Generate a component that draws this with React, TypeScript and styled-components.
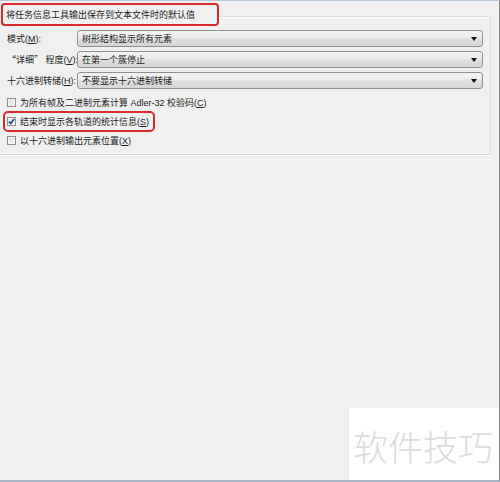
import React from 'react'
import styled, { createGlobalStyle } from 'styled-components'

const GlobalStyle = createGlobalStyle`
  html, body {
    margin: 0;
    padding: 0;
    background: #f0f0f0;
  }
  body {
    font-family: "Liberation Sans", "Noto Sans CJK SC", sans-serif;
    font-size: 9px;
    color: #1c1c1c;
  }
`

const Window = styled.div`
  position: relative;
  box-sizing: border-box;
  width: 500px;
  height: 482px;
  background: #f0f0f0;
  border-top: 1px solid #b7c6d6;
  border-right: 1px solid #8c8c8c;
  border-bottom: 2px solid #a9b8c9;
  padding-top: 2px;
  overflow: hidden;
`

const Title = styled.div`
  position: relative;
  z-index: 1;
  box-sizing: border-box;
  width: 218px;
  height: 23px;
  margin-left: 1px;
  padding-left: 3px;
  display: flex;
  align-items: center;
  background: #f0f0f0;
  border: 2px solid #dc2a2e;
  border-radius: 4px;
  white-space: nowrap;
`

const Group = styled.div`
  box-sizing: border-box;
  width: 491px;
  margin-top: -10px;
  padding: 13px 0 4px 7px;
  border-top: 1px solid #d8dde2;
  border-right: 1px solid #d8dde2;
  border-bottom: 1px solid #d8dde2;
  box-shadow: inset 0 1px 0 #fff, 0 1px 0 #fff;
  display: flex;
  flex-direction: column;
`

const Fields = styled.div`
  display: grid;
  grid-template-columns: 70px 406px;
  grid-auto-rows: 17px;
  row-gap: 4px;
  align-items: center;
  margin-bottom: 4px;
`

const Label = styled.div`
  white-space: nowrap;
`

// full-width quotes come from the CJK face
const Quote = styled.span`
  font-family: "Noto Sans CJK SC", sans-serif;
`

const Key = styled.span`
  text-decoration: underline;
`

const Combo = styled.div`
  box-sizing: border-box;
  height: 17px;
  padding: 0 5px 0 4px;
  display: flex;
  align-items: center;
  justify-content: space-between;
  border: 1px solid #8e8f8f;
  border-radius: 3px;
  background: linear-gradient(#f3f3f3 0%, #ececec 45%, #dedede 55%, #d6d6d6 100%);
  white-space: nowrap;
`

const Arrow = styled.span`
  width: 0;
  height: 0;
  border-left: 3px solid transparent;
  border-right: 3px solid transparent;
  border-top: 4px solid #111;
`

const CheckRow = styled.div<{ $marked?: boolean }>`
  box-sizing: border-box;
  display: flex;
  align-items: center;
  gap: 4px;
  height: 19px;
  width: ${({ $marked }) => ($marked ? '150px' : 'auto')};
  margin-left: ${({ $marked }) => ($marked ? '-3px' : '0')};
  padding-left: ${({ $marked }) => ($marked ? '3px' : '0')};
  outline: ${({ $marked }) => ($marked ? '2px solid #dc2a2e' : 'none')};
  outline-offset: -1px;
  border-radius: 4px;
  white-space: nowrap;
`

const Box = styled.span`
  box-sizing: border-box;
  width: 9px;
  height: 9px;
  flex: none;
  display: flex;
  align-items: center;
  justify-content: center;
  border: 1px solid #8f8f8f;
  background: linear-gradient(135deg, #dcdcdc, #f8f8f8);
  box-shadow: inset 0 0 0 1px #f4f4f4;
`

const Watermark = styled.div`
  position: absolute;
  right: 0;
  bottom: -2px;
  width: 150px;
  height: 74px;
  background: #fff;
  display: flex;
  align-items: center;
  padding-left: 4px;
  box-sizing: border-box;
  font-family: "Noto Sans CJK SC", sans-serif;
  font-size: 35px;
  font-weight: 300;
  color: #dcdcdc;
`

const Check = () => (
  <svg width="7" height="7" viewBox="0 0 7 7">
    <path d="M0.8 3.6 L2.7 5.6 L6.2 0.9" fill="none" stroke="#1d3f9a" strokeWidth="1.6" />
  </svg>
)

const fields = [
  { pre: '模式(', key: 'M', value: '树形结构显示所有元素' },
  { quoted: '“详细”', pre: ' 程度(', key: 'V', value: '在第一个簇停止' },
  { pre: '十六进制转储(', key: 'H', value: '不要显示十六进制转储' },
]

const options = [
  { text: ['为所有帧及二进制元素计算 Adler-32 校验码(', 'C', ')'], checked: false },
  { text: ['结束时显示各轨道的统计信息(', 'S', ')'], checked: true },
  { text: ['以十六进制输出元素位置(', 'X', ')'], checked: false },
]

export default function App() {
  return (
    <>
      <GlobalStyle />
      <Window>
        <Title>将任务信息工具输出保存到文本文件时的默认值</Title>
        <Group>
          <Fields>
            {fields.map((f) => (
              <React.Fragment key={f.key}>
                <Label>
                  {f.quoted && <Quote>{f.quoted}</Quote>}
                  {f.pre}
                  <Key>{f.key}</Key>
                  ):
                </Label>
                <Combo>
                  <span>{f.value}</span>
                  <Arrow />
                </Combo>
              </React.Fragment>
            ))}
          </Fields>
          {options.map((o) => (
            <CheckRow key={o.text[1]} $marked={o.checked}>
              <Box>{o.checked && <Check />}</Box>
              <span>
                {o.text[0]}
                <Key>{o.text[1]}</Key>
                {o.text[2]}
              </span>
            </CheckRow>
          ))}
        </Group>
        <Watermark>软件技巧</Watermark>
      </Window>
    </>
  )
}
